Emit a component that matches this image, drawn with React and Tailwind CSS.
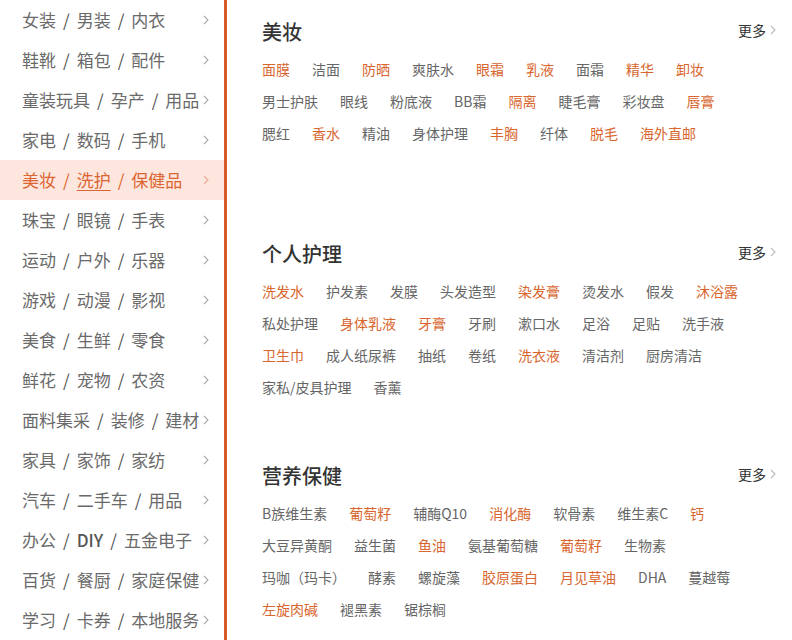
import { useState } from "react";

const categories = [
  ["女装", "男装", "内衣"],
  ["鞋靴", "箱包", "配件"],
  ["童装玩具", "孕产", "用品"],
  ["家电", "数码", "手机"],
  ["美妆", "洗护", "保健品"],
  ["珠宝", "眼镜", "手表"],
  ["运动", "户外", "乐器"],
  ["游戏", "动漫", "影视"],
  ["美食", "生鲜", "零食"],
  ["鲜花", "宠物", "农资"],
  ["面料集采", "装修", "建材"],
  ["家具", "家饰", "家纺"],
  ["汽车", "二手车", "用品"],
  ["办公", "DIY", "五金电子"],
  ["百货", "餐厨", "家庭保健"],
  ["学习", "卡券", "本地服务"],
];

// h: 标橙的热门词
const sections = [
  {
    title: "美妆",
    rows: [
      [["面膜", 1], ["洁面"], ["防晒", 1], ["爽肤水"], ["眼霜", 1], ["乳液", 1], ["面霜"], ["精华", 1], ["卸妆", 1]],
      [["男士护肤"], ["眼线"], ["粉底液"], ["BB霜"], ["隔离", 1], ["睫毛膏"], ["彩妆盘"], ["唇膏", 1]],
      [["腮红"], ["香水", 1], ["精油"], ["身体护理"], ["丰胸", 1], ["纤体"], ["脱毛", 1], ["海外直邮", 1]],
    ],
  },
  {
    title: "个人护理",
    rows: [
      [["洗发水", 1], ["护发素"], ["发膜"], ["头发造型"], ["染发膏", 1], ["烫发水"], ["假发"], ["沐浴露", 1]],
      [["私处护理"], ["身体乳液", 1], ["牙膏", 1], ["牙刷"], ["漱口水"], ["足浴"], ["足贴"], ["洗手液"]],
      [["卫生巾", 1], ["成人纸尿裤"], ["抽纸"], ["卷纸"], ["洗衣液", 1], ["清洁剂"], ["厨房清洁"]],
      [["家私/皮具护理"], ["香薰"]],
    ],
  },
  {
    title: "营养保健",
    rows: [
      [["B族维生素"], ["葡萄籽", 1], ["辅酶Q10"], ["消化酶", 1], ["软骨素"], ["维生素C"], ["钙", 1]],
      [["大豆异黄酮"], ["益生菌"], ["鱼油", 1], ["氨基葡萄糖"], ["葡萄籽", 1], ["生物素"]],
      [["玛咖（玛卡）"], ["酵素"], ["螺旋藻"], ["胶原蛋白", 1], ["月见草油", 1], ["DHA"], ["蔓越莓"]],
      [["左旋肉碱", 1], ["褪黑素"], ["锯棕榈"]],
    ],
  },
];

const Chevron = ({ className }) => (
  <svg width="6" height="10" viewBox="0 0 6 10" className={className} fill="none">
    <polyline points="1,1 5,5 1,9" stroke="currentColor" strokeWidth="1.1" />
  </svg>
);

const App = () => {
  const [active] = useState(4);

  return (
    <div
      className="flex w-[792px] h-[640px] overflow-hidden bg-white"
      style={{ fontFamily: '"Noto Sans CJK SC", "Noto Sans", sans-serif' }}
    >
      {/* 左侧类目 */}
      <div className="w-[227px] shrink-0 border-r-[3px] border-[#d9592a] flex flex-col">
        {categories.map((parts, i) => {
          const on = i === active;
          return (
            <div
              key={i}
              className={`h-10 flex items-center pl-[22px] pr-[15px] text-[17px] whitespace-nowrap ${
                on ? "bg-[#fde6de] text-[#dc6531]" : "text-[#6a6a6a]"
              }`}
            >
              <div className="flex-1 flex items-center">
                {parts.map((p, j) => (
                  <span key={j} className="flex items-center">
                    {j > 0 && (
                      <span className={`mx-[7px] ${on ? "text-[#dc6531]" : "text-[#555]"}`}>/</span>
                    )}
                    <span
                      className={`${on && j === 1 ? "underline underline-offset-[3px]" : ""} ${
                        p === "DIY" ? "font-medium text-[#555]" : ""
                      }`}
                    >
                      {p}
                    </span>
                  </span>
                ))}
              </div>
              <Chevron className={`shrink-0 ${on ? "text-[#eba894]" : "text-[#aaa]"}`} />
            </div>
          );
        })}
      </div>

      {/* 右侧内容 */}
      <div className="flex-1 pl-[35px] pr-[16px] flex flex-col">
        {sections.map((s) => (
          <div key={s.title} className="h-[222px] shrink-0 pt-[20px]">
            <div className="flex items-center justify-between h-6">
              <h2 className="text-[20px] leading-6 font-medium text-[#333]">{s.title}</h2>
              <div className="flex items-center gap-[4px] text-[14px] text-[#333] -mt-[4px]">
                更多
                <Chevron className="text-[#bbb]" />
              </div>
            </div>
            <div className="mt-[9px] flex flex-col">
              {s.rows.map((row, ri) => (
                <div key={ri} className="h-8 flex items-center gap-[22px] text-[14px] whitespace-nowrap">
                  {row.map(([t, h], ti) => (
                    <span key={ti} className={h ? "text-[#d8662e]" : "text-[#666]"}>
                      {t}
                    </span>
                  ))}
                </div>
              ))}
            </div>
          </div>
        ))}
      </div>
    </div>
  );
};

export default App;
